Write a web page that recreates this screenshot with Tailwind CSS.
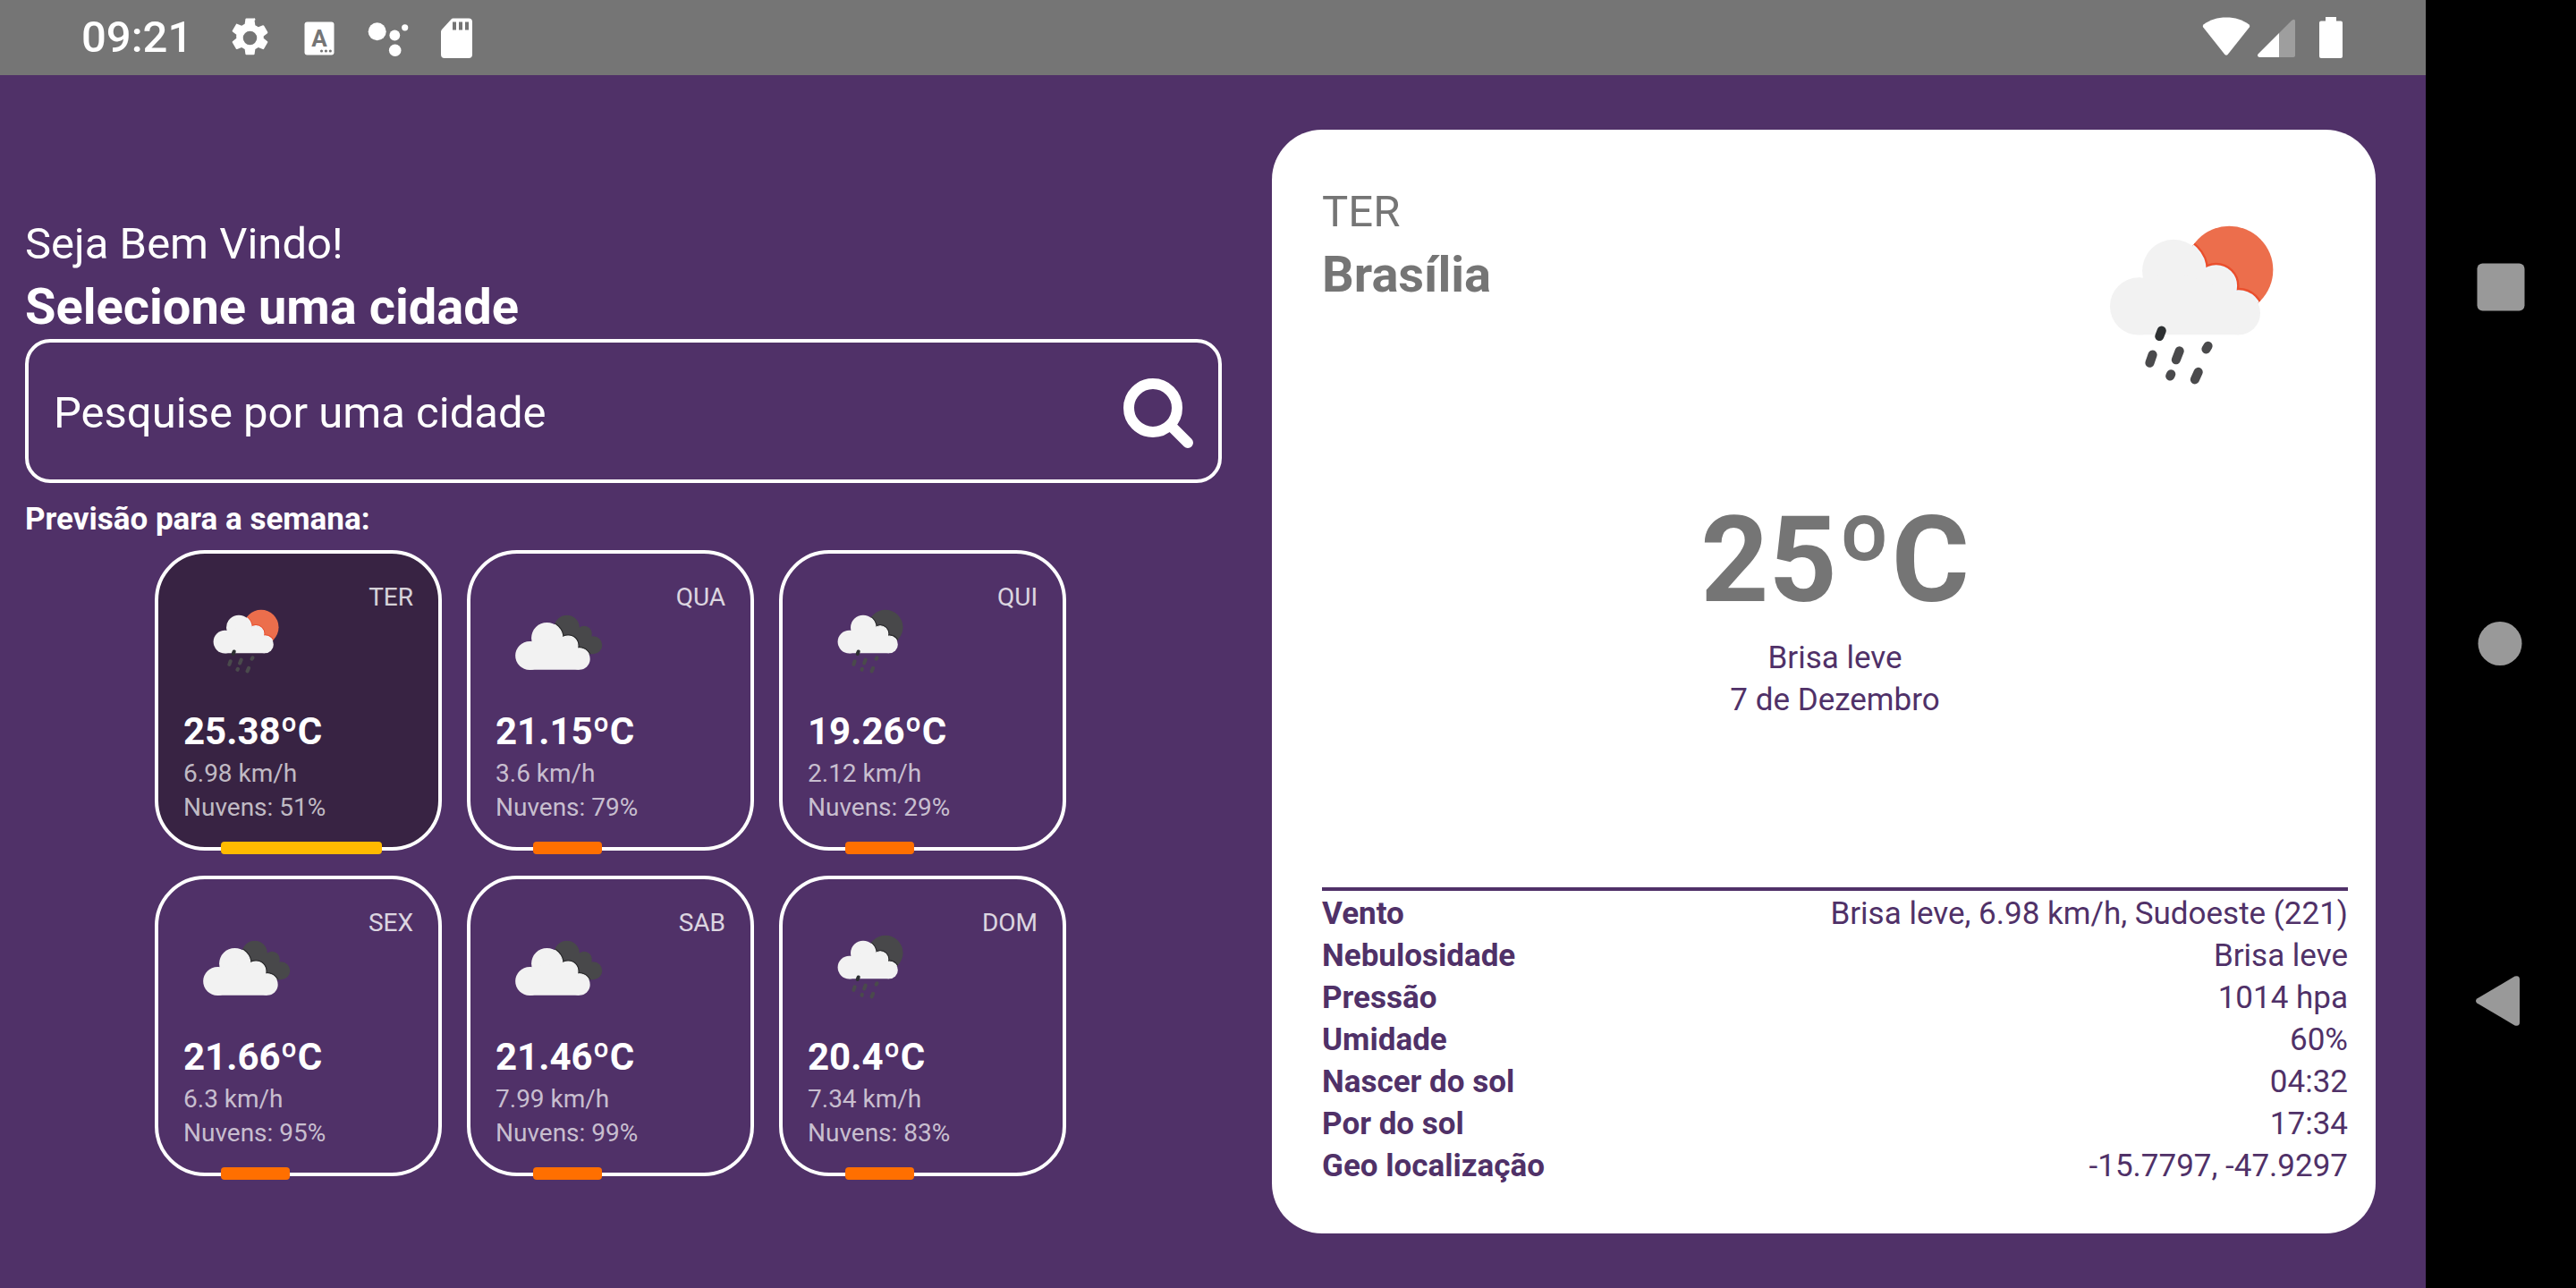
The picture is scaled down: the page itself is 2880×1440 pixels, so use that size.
<!DOCTYPE html>
<html lang="pt-BR">
<head>
<meta charset="utf-8">
<meta name="viewport" content="width=device-width, initial-scale=1">
<title>Previsão do tempo</title>
<script src="https://cdn.jsdelivr.net/npm/@tailwindcss/browser@4"></script>
</head>
<body class="flex min-h-screen bg-black font-[Roboto,sans-serif]">

<!-- Shared weather artwork -->
<svg class="absolute" width="0" height="0" aria-hidden="true">
  <defs>
    <g id="cloud-shape">
      <circle cx="33.2" cy="50.4" r="9.2"/>
      <circle cx="44.3" cy="39.1" r="10"/>
      <circle cx="57.9" cy="43.9" r="6.2"/>
      <circle cx="65.1" cy="52.6" r="6.9"/>
      <path d="M33.2 41.2L36 42L44.3 39L58 44L64 46L65.1 59.5H33.2Z"/>
    </g>
    <clipPath id="disc-clip"><circle cx="62.1" cy="38.8" r="14"/></clipPath>
    <clipPath id="back-clip">
      <circle cx="57" cy="39.1" r="10"/>
      <circle cx="70.8" cy="43.9" r="6.2"/>
      <circle cx="78.1" cy="53" r="7.1"/>
      <path d="M49 41L57 39L71 44L77 46L78.1 60.1H46Z"/>
    </clipPath>
    <g id="rain" fill="none" stroke-width="2.9" stroke-linecap="round" stroke="#4a4a4c">
      <path stroke="#2d3032" d="M40.5 58.2L39.8 60"/>
      <path d="M37.6 65.9L36.7 68.5M46.2 64.7L45.1 67.5M55.3 63.1L54.7 64.1M43.5 72.1L43.2 72.7M52.2 71.4L51.1 73.8"/>
    </g>
    <symbol id="rain-day" viewBox="0 0 100 100">
      <circle cx="62.1" cy="38.8" r="14" fill="#ec6e4c"/>
      <g clip-path="url(#disc-clip)">
        <use href="#cloud-shape" stroke="#ea4f2d" stroke-width="2.4"/>
        <use href="#cloud-shape" stroke="#eef6fb" stroke-width="1"/>
      </g>
      <use href="#cloud-shape" fill="#f2f2f2"/>
      <use href="#rain"/>
    </symbol>
    <symbol id="rain-night" viewBox="0 0 100 100">
      <circle cx="62.1" cy="38.8" r="14" fill="#48484a"/>
      <g clip-path="url(#disc-clip)">
        <use href="#cloud-shape" stroke="#2a2a2c" stroke-width="2.4"/>
        <use href="#cloud-shape" stroke="#ffffff" stroke-width=".8"/>
      </g>
      <use href="#cloud-shape" fill="#f2f2f2"/>
      <use href="#rain"/>
    </symbol>
    <symbol id="clouds" viewBox="0 0 100 100">
      <g clip-path="url(#back-clip)">
        <rect width="100" height="100" fill="#48484a"/>
        <g transform="translate(-14 -1.2) scale(1.243)">
          <use href="#cloud-shape" stroke="#2a2a2c" stroke-width="2"/>
          <use href="#cloud-shape" stroke="#ffffff" stroke-width=".6"/>
        </g>
      </g>
      <g transform="translate(-14 -1.2) scale(1.243)"><use href="#cloud-shape" fill="#f2f2f2"/></g>
    </symbol>
  </defs>
</svg>

<div class="flex min-w-0 flex-1 flex-col bg-[#503168]">
  <!-- Status bar -->
  <header class="flex h-21 items-center justify-between bg-[#757575] pr-[93px] pl-[91px] text-white">
    <div class="flex items-center gap-7">
      <time class="mr-3 text-[49px] leading-[60px] font-medium">09:21</time>
      <svg class="size-[49px]" viewBox="0 0 24 24" fill="currentColor" aria-hidden="true"><path fill-rule="evenodd" d="M19.5 12c0-.34-.03-.66-.07-.98l2.11-1.65c.19-.15.24-.42.12-.64l-2-3.46c-.12-.22-.39-.3-.61-.22l-2.49 1c-.52-.4-1.08-.73-1.69-.98l-.38-2.65A.49.49 0 0 0 14 1.2h-4c-.25 0-.46.18-.49.42l-.38 2.65c-.61.25-1.17.59-1.69.98l-2.49-1c-.23-.09-.49 0-.61.22l-2 3.46c-.13.22-.07.49.12.64l2.11 1.65c-.04.32-.07.65-.07.98s.03.66.07.98l-2.11 1.65c-.19.15-.24.42-.12.64l2 3.46c.12.22.39.3.61.22l2.49-1c.52.4 1.08.73 1.69.98l.38 2.65c.03.24.24.42.49.42h4c.25 0 .46-.18.49-.42l.38-2.65c.61-.25 1.17-.59 1.69-.98l2.49 1c.23.09.49 0 .61-.22l2-3.46c.12-.22.07-.49-.12-.64l-2.11-1.65c.04-.32.07-.64.07-.98zM12 15.8a3.8 3.8 0 1 1 0-7.6 3.8 3.8 0 0 1 0 7.6z"/></svg>
      <svg class="size-[49px]" viewBox="0 0 49 49" aria-hidden="true">
        <rect x="8.500" y="6.500" width="33" height="37" rx="3" fill="#fff"/>
        <text x="25" y="34" text-anchor="middle" font-family="Roboto, sans-serif" font-weight="700" font-size="26" fill="#757575">A</text>
        <g fill="#757575"><circle cx="27.500" cy="39" r="1.6"/><circle cx="32.400" cy="39" r="1.6"/><circle cx="37.300" cy="39" r="1.6"/></g>
      </svg>
      <svg class="size-[49px]" viewBox="0 0 49 49" fill="currentColor" aria-hidden="true"><circle cx="12.7" cy="17.2" r="10"/><circle cx="32.3" cy="21.5" r="5.9"/><circle cx="43.7" cy="12.8" r="3.6"/><circle cx="32.7" cy="38.2" r="6.8"/></svg>
      <svg class="size-[49px]" viewBox="0 0 49 49" aria-hidden="true">
        <path fill="#fff" d="M20.5 2.5H38a4 4 0 0 1 4 4V43a4 4 0 0 1-4 4H11a4 4 0 0 1-4-4V17.500Q7 16 8 15L18.500 3.500Q19.300 2.500 20.500 2.500Z"/>
        <path fill="#757575" d="M20 6.500h4v9h-4zM27 6.500h4v9h-4zM34 6.500h4v9h-4z"/>
      </svg>
    </div>
    <div class="flex items-center">
      <svg class="h-[46px] w-[54px]" viewBox="0 0 54 46" fill="currentColor" aria-hidden="true"><path d="M1.500 8.500C9 3 17 .5 27 .5s18 2.500 25.500 8q1.500 1.300.3 3L28.600 42q-1.600 1.600-3.200 0L1.200 11.500q-1.200-1.700.3-3z"/></svg>
      <svg class="ml-2 h-[46px] w-[42px]" viewBox="0 0 42 46" fill="currentColor" aria-hidden="true"><path fill-opacity=".3" d="M24 18L38 4Q42 1 42 5V43Q42 45 40 45H24Z"/><path d="M24 18V45H2Q-1 44 .5 41.500Z"/></svg>
      <svg class="ml-[27px] h-[46px] w-[26px]" viewBox="0 0 26 46" fill="currentColor" aria-hidden="true"><path d="M7 0h12v4.500h5a2 2 0 0 1 2 2V44a2 2 0 0 1-2 2H2a2 2 0 0 1-2-2V6.500a2 2 0 0 1 2-2h5z"/></svg>
    </div>
  </header>

  <main class="flex flex-1 items-stretch">
    <!-- Search and weekly forecast -->
    <section class="flex min-w-0 flex-1 flex-col justify-center px-7 pt-[29px] text-white">
      <p class="text-[49px] leading-[69px]">Seja Bem Vindo!</p>
      <h1 class="text-[56px] leading-[72px] font-bold">Selecione uma cidade</h1>
      <form class="flex h-[161px] items-center rounded-[28px] border-4 border-white px-7 pt-1">
        <input type="text" aria-label="Cidade" placeholder="Pesquise por uma cidade" class="min-w-0 flex-1 bg-transparent text-[49px] leading-[69px] text-white placeholder-white outline-none">
        <button type="button" aria-label="Buscar">
          <svg class="size-[78px]" viewBox="0 0 78 78" fill="none" stroke="#fff" stroke-width="12" aria-hidden="true"><circle cx="33" cy="33" r="27"/><path stroke-linecap="round" d="M53 53L72 72"/></svg>
        </button>
      </form>
      <h2 class="pt-5 pb-[13px] text-[35px] leading-[42px] font-bold">Previsão para a semana:</h2>
      <div class="grid grid-cols-[repeat(3,321px)] justify-center gap-7 pr-[29px]">
        <button type="button" aria-pressed="true" class="relative flex flex-col rounded-[56px] border-4 border-white bg-[#382343] px-7 pt-7 pb-[25px] text-left text-[28px] leading-[38px] text-white/70">
          <span class="flex w-full items-start justify-between"><svg class="size-[140px]" aria-hidden="true"><use href="#rain-day"/></svg><span class="leading-[42px] text-white/80">TER</span></span>
          <strong class="mt-[3px] mb-px text-[42px] leading-[55px] text-white">25.38ºC</strong>
          <span>6.98 km/h</span><span>Nuvens: 51%</span>
          <span class="absolute -bottom-2 left-[70px] h-3.5 w-[180px] rounded bg-[#ffba00]"></span>
        </button>
        <button type="button" class="relative flex flex-col rounded-[56px] border-4 border-white px-7 pt-7 pb-[25px] text-left text-[28px] leading-[38px] text-white/70">
          <span class="flex w-full items-start justify-between"><svg class="size-[140px]" aria-hidden="true"><use href="#clouds"/></svg><span class="leading-[42px] text-white/80">QUA</span></span>
          <strong class="mt-[3px] mb-px text-[42px] leading-[55px] text-white">21.15ºC</strong>
          <span>3.6 km/h</span><span>Nuvens: 79%</span>
          <span class="absolute -bottom-2 left-[70px] h-3.5 w-[77px] rounded bg-[#ff6f00]"></span>
        </button>
        <button type="button" class="relative flex flex-col rounded-[56px] border-4 border-white px-7 pt-7 pb-[25px] text-left text-[28px] leading-[38px] text-white/70">
          <span class="flex w-full items-start justify-between"><svg class="size-[140px]" aria-hidden="true"><use href="#rain-night"/></svg><span class="leading-[42px] text-white/80">QUI</span></span>
          <strong class="mt-[3px] mb-px text-[42px] leading-[55px] text-white">19.26ºC</strong>
          <span>2.12 km/h</span><span>Nuvens: 29%</span>
          <span class="absolute -bottom-2 left-[70px] h-3.5 w-[77px] rounded bg-[#ff6f00]"></span>
        </button>
        <button type="button" class="relative flex flex-col rounded-[56px] border-4 border-white px-7 pt-7 pb-[25px] text-left text-[28px] leading-[38px] text-white/70">
          <span class="flex w-full items-start justify-between"><svg class="size-[140px]" aria-hidden="true"><use href="#clouds"/></svg><span class="leading-[42px] text-white/80">SEX</span></span>
          <strong class="mt-[3px] mb-px text-[42px] leading-[55px] text-white">21.66ºC</strong>
          <span>6.3 km/h</span><span>Nuvens: 95%</span>
          <span class="absolute -bottom-2 left-[70px] h-3.5 w-[77px] rounded bg-[#ff6f00]"></span>
        </button>
        <button type="button" class="relative flex flex-col rounded-[56px] border-4 border-white px-7 pt-7 pb-[25px] text-left text-[28px] leading-[38px] text-white/70">
          <span class="flex w-full items-start justify-between"><svg class="size-[140px]" aria-hidden="true"><use href="#clouds"/></svg><span class="leading-[42px] text-white/80">SAB</span></span>
          <strong class="mt-[3px] mb-px text-[42px] leading-[55px] text-white">21.46ºC</strong>
          <span>7.99 km/h</span><span>Nuvens: 99%</span>
          <span class="absolute -bottom-2 left-[70px] h-3.5 w-[77px] rounded bg-[#ff6f00]"></span>
        </button>
        <button type="button" class="relative flex flex-col rounded-[56px] border-4 border-white px-7 pt-7 pb-[25px] text-left text-[28px] leading-[38px] text-white/70">
          <span class="flex w-full items-start justify-between"><svg class="size-[140px]" aria-hidden="true"><use href="#rain-night"/></svg><span class="leading-[42px] text-white/80">DOM</span></span>
          <strong class="mt-[3px] mb-px text-[42px] leading-[55px] text-white">20.4ºC</strong>
          <span>7.34 km/h</span><span>Nuvens: 83%</span>
          <span class="absolute -bottom-2 left-[70px] h-3.5 w-[77px] rounded bg-[#ff6f00]"></span>
        </button>
      </div>
    </section>

    <!-- Selected day -->
    <article class="mr-14 ml-7 flex aspect-square w-[45.5%] flex-col self-center rounded-[56px] bg-white pt-[21px] pr-[31px] pb-[52px] pl-14 text-[35px] leading-[47px] text-[#503168]">
      <div class="flex justify-between text-[#757575]">
        <div class="pt-9">
          <p class="text-[49px] leading-[69px]">TER</p>
          <h2 class="text-[56px] leading-[72px] font-bold">Brasília</h2>
        </div>
        <svg class="size-[350px]" role="img" aria-label="Chuva"><use href="#rain-day"/></svg>
      </div>
      <div class="pt-[26px] text-center">
        <p class="text-[133px] leading-[170px] font-bold text-[#757575]">25ºC</p>
        <p>Brisa leve</p>
        <p>7 de Dezembro</p>
      </div>
      <div class="mt-auto border-t-4 border-[#503168] pt-0.5">
        <table class="w-full">
          <tbody>
            <tr><th scope="row" class="p-0 text-left font-bold">Vento</th><td class="p-0 text-right">Brisa leve, 6.98 km/h, Sudoeste (221)</td></tr>
            <tr><th scope="row" class="p-0 text-left font-bold">Nebulosidade</th><td class="p-0 text-right">Brisa leve</td></tr>
            <tr><th scope="row" class="p-0 text-left font-bold">Pressão</th><td class="p-0 text-right">1014 hpa</td></tr>
            <tr><th scope="row" class="p-0 text-left font-bold">Umidade</th><td class="p-0 text-right">60%</td></tr>
            <tr><th scope="row" class="p-0 text-left font-bold">Nascer do sol</th><td class="p-0 text-right">04:32</td></tr>
            <tr><th scope="row" class="p-0 text-left font-bold">Por do sol</th><td class="p-0 text-right">17:34</td></tr>
            <tr><th scope="row" class="p-0 text-left font-bold">Geo localização</th><td class="p-0 text-right">-15.7797, -47.9297</td></tr>
          </tbody>
        </table>
      </div>
    </article>
  </main>
</div>

<!-- System navigation -->
<nav aria-label="Sistema" class="flex w-[168px] shrink-0 flex-col items-stretch py-[122px]">
  <button type="button" aria-label="Recentes" class="flex flex-1 items-center justify-center"><svg class="size-14" viewBox="0 0 56 56" fill="#999"><rect x="1.500" y="1.500" width="53" height="53" rx="6"/></svg></button>
  <button type="button" aria-label="Início" class="flex flex-1 items-center justify-center"><svg class="size-14" viewBox="0 0 56 56" fill="#999"><circle cx="27" cy="27.500" r="24.500"/></svg></button>
  <button type="button" aria-label="Voltar" class="flex flex-1 items-center justify-center"><svg class="size-14" viewBox="0 0 56 56" fill="#999"><path d="M1.300 25.500L43.500.6Q49 -1 49 4V52Q49 57 43.500 55.400L1.300 30.500Q-1.300 28 1.300 25.500Z"/></svg></button>
</nav>
</body>
</html>
